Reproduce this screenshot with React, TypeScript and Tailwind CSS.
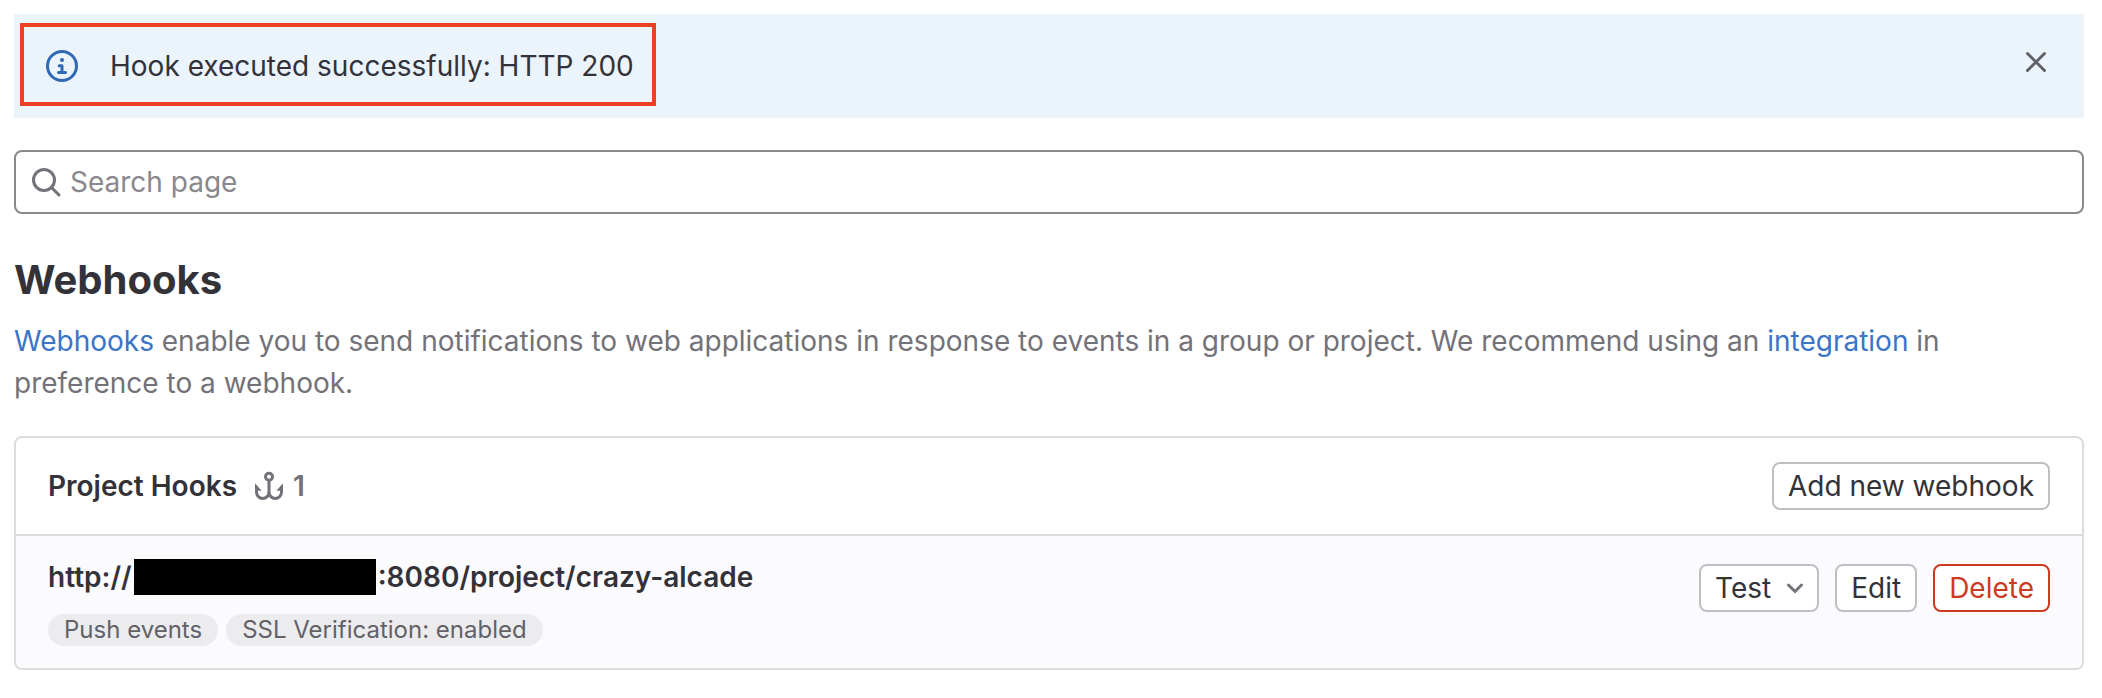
import React, { useState } from 'react';

const buttonBase = 'h-12 px-[14px] border-2 rounded-lg bg-white whitespace-nowrap flex items-center';
const defaultButton = `${buttonBase} border-[#bfbfc3] text-[#333238]`;

const events = ['Push events', 'SSL Verification: enabled'];

const InfoIcon = () => (
  <svg viewBox="0 0 16 16" className="size-8 shrink-0" fill="none" stroke="currentColor" aria-hidden="true">
    <circle cx="8" cy="8" r="7.25" strokeWidth="1.5" />
    <circle cx="8" cy="5" r="1" fill="currentColor" stroke="none" />
    <path d="M6.6 7.9H8v3.35M6.25 11.25h3.5" strokeWidth="1.5" strokeLinecap="round" strokeLinejoin="round" />
  </svg>
);

const CloseIcon = () => (
  <svg viewBox="0 0 16 16" className="size-8" fill="none" stroke="currentColor" strokeWidth="1.5" strokeLinecap="round" aria-hidden="true">
    <path d="M3.75 3.75l8.5 8.5M12.25 3.75l-8.5 8.5" />
  </svg>
);

const SearchIcon = () => (
  <svg viewBox="0 0 16 16" className="size-8 shrink-0" fill="none" stroke="currentColor" strokeWidth="1.5" aria-hidden="true">
    <circle cx="7" cy="7" r="5.25" />
    <path d="M10.75 10.75l3.75 3.75" strokeLinecap="round" />
  </svg>
);

const HookIcon = () => (
  <svg viewBox="0 0 16 16" className="size-8" fill="none" stroke="currentColor" strokeWidth="1.5" aria-hidden="true">
    <circle cx="8" cy="3.4" r="1.75" />
    <path d="M8 5v6.5" />
    <path d="M1.75 8v3.1a3.125 3.125 0 0 0 6.25 0a3.125 3.125 0 0 0 6.25 0V8" />
    <path d="M1 6.6l3.3 3.8H1zM15 6.6l-3.3 3.8H15z" fill="currentColor" stroke="none" />
  </svg>
);

const ChevronIcon = () => (
  <svg viewBox="0 0 16 16" className="size-8" fill="none" stroke="currentColor" strokeWidth="1.5" strokeLinecap="round" aria-hidden="true">
    <path d="M4.75 6.5L8 9.75l3.25-3.25" />
  </svg>
);

const HookAlert: React.FC<{ onDismiss: () => void }> = ({ onDismiss }) => (
  <div role="status" className="relative flex items-start justify-between bg-[#ebf3fb] p-8 mb-8">
    <div className="absolute left-[6px] top-[9px] w-[636px] h-[83px] border-4 border-[#ec4224] pointer-events-none" />
    <div className="flex items-center gap-8">
      <span className="text-[#2f68b4]"><InfoIcon /></span>
      <p className="leading-10">Hook executed successfully: HTTP 200</p>
    </div>
    <button type="button" aria-label="Dismiss" onClick={onDismiss} className="text-[#626168]">
      <CloseIcon />
    </button>
  </div>
);

const App: React.FC = () => {
  const [showAlert, setShowAlert] = useState(true);
  const [query, setQuery] = useState('');

  return (
    <main className="bg-white text-[#333238] text-[28px] leading-[42px] font-['Inter','Liberation_Sans',sans-serif] pl-[14px] pr-[18px] pt-[14px] pb-7">
      {showAlert && <HookAlert onDismiss={() => setShowAlert(false)} />}

      <div className="flex items-center gap-2 h-16 px-[14px] border-2 border-[#89888d] rounded-lg text-[#737278]">
        <SearchIcon />
        <input
          type="search"
          aria-label="Search page"
          placeholder="Search page"
          value={query}
          onChange={(e) => setQuery(e.target.value)}
          className="flex-1 min-w-0 bg-transparent text-[#333238] placeholder:text-[#89888d] focus:outline-none"
        />
      </div>

      <h1 className="mt-10 text-[40px] leading-[52px] font-bold">Webhooks</h1>
      <p className="mt-[14px] text-[#737278]">
        <a href="#webhooks" className="text-[#3b74c9]">Webhooks</a> enable you to send notifications to web
        applications in response to events in a group or project. We recommend using an{' '}
        <a href="#integration" className="text-[#3b74c9]">integration</a> in preference to a webhook.
      </p>

      <section className="mt-8 border-2 border-[#dcdcde] rounded-lg overflow-hidden">
        <header className="flex items-center justify-between px-8 py-6">
          <div className="flex items-center gap-4 font-semibold">
            <h2>Project Hooks</h2>
            <span className="flex items-center gap-2 text-[#737278]">
              <HookIcon />
              1
            </span>
          </div>
          <button type="button" className={defaultButton}>Add new webhook</button>
        </header>

        <div className="flex items-start justify-between px-8 pt-5 pb-[22px] bg-[#fbfafd] border-t-2 border-[#dcdcde]">
          <div>
            <div className="flex items-center font-semibold">
              http://
              <span className="w-[242px] h-9 mx-0.5 bg-black" />
              :8080/project/crazy-alcade
            </div>
            <div className="flex gap-2 mt-4">
              {events.map((event) => (
                <span key={event} className="px-4 rounded-full bg-[#ececef] text-[#626168] text-2xl leading-8">
                  {event}
                </span>
              ))}
            </div>
          </div>
          <div className="flex gap-4 mt-2">
            <button type="button" className={defaultButton}>
              Test
              <span className="ml-2 -mr-2 text-[#737278]"><ChevronIcon /></span>
            </button>
            <button type="button" className={defaultButton}>Edit</button>
            <button type="button" className={`${buttonBase} border-[#cc3b21] text-[#cc3b21]`}>Delete</button>
          </div>
        </div>
      </section>
    </main>
  );
};

export default App;
